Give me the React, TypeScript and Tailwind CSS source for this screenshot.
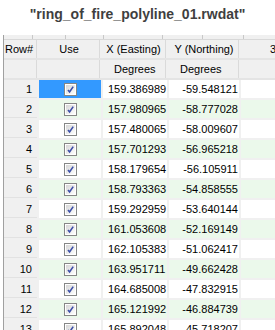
import React from "react";

const rows: [number, string, string][] = [
  [1, "159.386989", "-59.548121"],
  [2, "157.980965", "-58.777028"],
  [3, "157.480065", "-58.009607"],
  [4, "157.701293", "-56.965218"],
  [5, "158.179654", "-56.105911"],
  [6, "158.793363", "-54.858555"],
  [7, "159.292959", "-53.640144"],
  [8, "161.053608", "-52.169149"],
  [9, "162.105383", "-51.062417"],
  [10, "163.951711", "-49.662428"],
  [11, "164.685008", "-47.832915"],
  [12, "165.121992", "-46.884739"],
  [13, "165.892048", "-45.718207"],
];

const CheckBox: React.FC = () => (
  <svg width="13" height="13" viewBox="0 0 13 13">
    <defs>
      <linearGradient id="cbg" x1="0" y1="0" x2="1" y2="1">
        <stop offset="0" stopColor="#d6d6d6" />
        <stop offset="1" stopColor="#ffffff" />
      </linearGradient>
    </defs>
    <rect x="0.5" y="0.5" width="12" height="12" fill="#ffffff" stroke="#858686" />
    <rect x="2" y="2" width="9" height="9" fill="url(#cbg)" />
    <path d="M4 7 L5.6 9 L9.2 3.6" fill="none" stroke="#3c4fa8" strokeWidth="1.6" />
  </svg>
);

const App: React.FC = () => {
  return (
    <div
      className="w-[275px] h-[330px] overflow-hidden bg-white text-black"
      style={{ fontFamily: '"Liberation Sans", Arial, sans-serif' }}
    >
      <div className="h-[35px] pt-[6px] text-center text-[14px] leading-[16px] font-bold text-[#3f3f3f]">
        "ring_of_fire_polyline_01.rwdat"
      </div>

      <div className="ml-[3px] border-l border-[#a0a0a0] text-[11px] leading-[18px]">
        {/* top strip */}
        <div className="relative h-[5px] bg-[#f0f0f0] border-b border-[#d8d8d8]">
          {[32, 65, 103, 162, 202, 243].map((x) => (
            <div key={x} className="absolute top-0 h-[4px] w-px bg-[#c8c8c8]" style={{ left: x - 4 }} />
          ))}
        </div>

        {/* header rows */}
        <div className="flex h-[20px] gap-[2px] bg-[#f0f0f0] border-b-2 border-[#e4e4e4]">
          <div className="w-[33px] shrink-0 pl-[1px] border-r border-[#dadada]">Row#</div>
          <div className="w-[61px] shrink-0 text-center border-r border-[#dadada]">Use</div>
          <div className="w-[64px] shrink-0 text-center border-r border-[#dadada]">X (Easting)</div>
          <div className="w-[71px] shrink-0 text-center pl-[2px] border-r border-[#dadada]">Y (Northing)</div>
          <div className="flex-1 pl-[29px] whitespace-nowrap">3</div>
        </div>
        <div className="flex h-[20px] gap-[2px] bg-[#f0f0f0] border-b-2 border-[#e4e4e4]">
          <div className="w-[33px] shrink-0 border-r border-[#dadada]" />
          <div className="w-[61px] shrink-0 border-r border-[#dadada]" />
          <div className="w-[64px] shrink-0 pl-[12px] border-r border-[#dadada]">Degrees</div>
          <div className="w-[71px] shrink-0 pl-[12px] border-r border-[#dadada]">Degrees</div>
          <div className="flex-1" />
        </div>

        {/* data rows */}
        {rows.map(([n, x, y]) => {
          const bg = n % 2 === 0 ? "bg-[#ebf9eb]" : "bg-white";
          return (
            <div key={n} className="flex h-[20px] gap-[2px] bg-[#f0f0f0] pb-[2px]">
              <div className="w-[33px] shrink-0 text-right pr-[5px] border-b border-[#e2e2e2]">{n}</div>
              <div
                className={`w-[62px] shrink-0 flex items-center justify-center ${
                  n === 1 ? "bg-[#3399ff]" : bg
                }`}
              >
                <CheckBox />
              </div>
              <div className={`w-[64px] shrink-0 pl-[5px] ${bg}`}>{x}</div>
              <div className={`w-[70px] shrink-0 text-right pr-[1px] ${bg}`}>{y}</div>
              <div className={`flex-1 ${bg}`} />
            </div>
          );
        })}
      </div>
    </div>
  );
};

export default App;
